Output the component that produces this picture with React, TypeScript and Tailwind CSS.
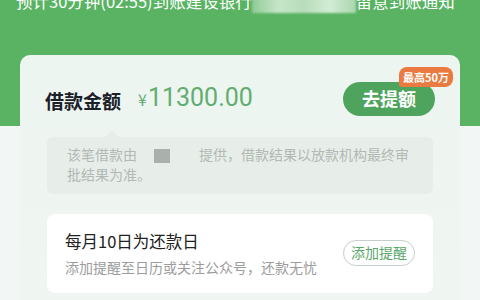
export default function App() {
  const font = { fontFamily: '"Noto Sans CJK SC", "Noto Sans", sans-serif' };
  return (
    <div
      className="w-[480px] h-[300px] overflow-hidden bg-[linear-gradient(to_bottom,#59b363_0,#59b363_126px,#f2f6f4_126px)]"
      style={font}
    >
      {/* TOP NOTICE */}
      <div className="-mt-[9px] pl-[16px] whitespace-nowrap text-[16.5px] leading-[20px] text-white">
        预计30分钟(02:55)到账建设银行
        <span className="inline-block w-[104px] h-[18px] align-middle bg-[linear-gradient(to_right,#8fcb96,#c6e6c9,#b8ddbb,#d3ecd5,#a9d6ae)] blur-[1px]" />
        留意到账通知
      </div>

      {/* MAIN CARD */}
      <div className="mt-[42px] mx-[20px] h-[300px] pt-[27px] rounded-[10px] bg-[linear-gradient(to_bottom,#edf5f0,#f0f6f2)]">
        <div className="flex items-center justify-between h-[34px] pl-[25px] pr-[25px]">
          <div className="flex items-baseline leading-[30px]">
            <span className="text-[19px] font-bold text-[#1b2029] relative top-[3px]">借款金额</span>
            <span className="ml-[17px] text-[16px] text-[#62ad70]">¥</span>
            <span className="ml-[1px] text-[25px] text-[#62ad70]" style={{ fontFamily: 'Roboto, "Noto Sans", sans-serif' }}>
              11300.00
            </span>
          </div>
          <div className="relative">
            <button className="w-[92px] h-[34px] rounded-full bg-[#4fa45d] text-white text-[18px] font-semibold">
              去提额
            </button>
            <span className="absolute -top-[15px] -right-[18px] h-[20px] px-[4px] rounded-[8px] rounded-bl-[3px] bg-[#ea7a3f] text-white text-[11px] font-bold leading-[20px] whitespace-nowrap">
              最高50万
            </span>
          </div>
        </div>

        {/* TOOLTIP NOTICE */}
        <div className="mx-[27px] mt-[14px]">
          <div className="ml-[58px] w-0 h-0 border-x-[7px] border-x-transparent border-b-[7px] border-b-[#e7eee9]" />
          <div className="rounded-[6px] bg-[#e7eee9] pt-[7px] pb-[10px] pl-[20px] pr-[24px] text-[14px] leading-[20px] text-[#b2b9b4]">
            该笔借款由
            <span className="inline-block align-middle ml-[17px] mr-[29px] w-[16px] h-[14px] bg-[#aab0ab]" />
            提供，借款结果以放款机构最终审批结果为准。
          </div>
        </div>

        {/* REPAYMENT CARD */}
        <div className="mx-[27px] mt-[20px] rounded-[8px] bg-white flex items-center justify-between pt-[15px] pb-[16px] pl-[18px] pr-[18px]">
          <div>
            <div className="text-[16.5px] leading-[24px] text-[#222]">每月10日为还款日</div>
            <div className="mt-[4px] text-[14px] leading-[20px] text-[#9c9c9c]">
              添加提醒至日历或关注公众号，还款无忧
            </div>
          </div>
          <button className="w-[72px] h-[26px] rounded-full border border-[#c6d0c9] text-[14px] text-[#5aa66a]">
            添加提醒
          </button>
        </div>
      </div>
    </div>
  );
}
